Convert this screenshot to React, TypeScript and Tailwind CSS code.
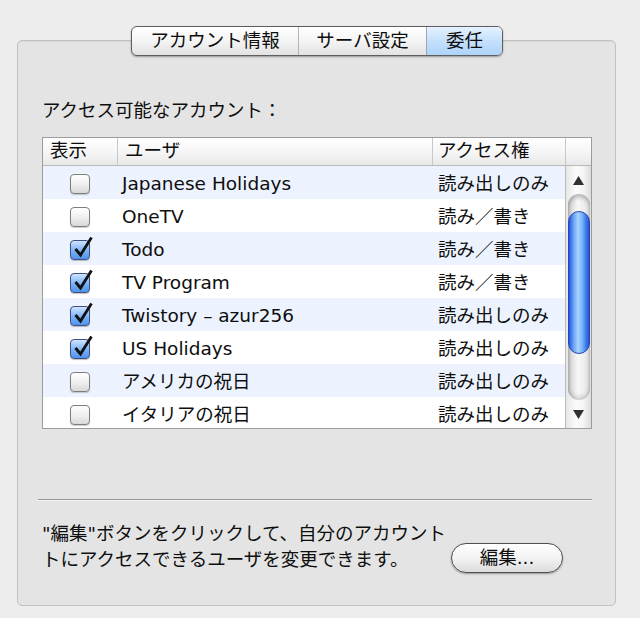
const rows = [
  { name: "Japanese Holidays", on: false, access: "読み出しのみ" },
  { name: "OneTV", on: false, access: "読み／書き" },
  { name: "Todo", on: true, access: "読み／書き" },
  { name: "TV Program", on: true, access: "読み／書き" },
  { name: "Twistory – azur256", on: true, access: "読み出しのみ" },
  { name: "US Holidays", on: true, access: "読み出しのみ" },
  { name: "アメリカの祝日", on: false, access: "読み出しのみ" },
  { name: "イタリアの祝日", on: false, access: "読み出しのみ" },
];

function CheckBox({ on }: { on: boolean }) {
  return (
    <span
      className={
        on
          ? "relative block h-[20px] w-[20px] rounded-[4px] border border-[#3d4f86] bg-[linear-gradient(#cfe4ff,#78b2f6_55%,#4f93ea)] shadow-[0_1px_1px_rgba(0,0,0,0.25)]"
          : "relative block h-[20px] w-[20px] rounded-[4px] border border-[#7e7e7e] bg-[linear-gradient(#ffffff,#ececec_60%,#d8d8d8)] shadow-[0_1px_1px_rgba(0,0,0,0.2)]"
      }
    >
      {on && (
        <svg className="absolute -top-[6px] left-[1px]" width="22" height="24" viewBox="0 0 22 24">
          <path d="M3.5 14 L8.5 20 L19.5 2.5" stroke="#111" strokeWidth="2.8" fill="none" />
        </svg>
      )}
    </span>
  );
}

function Scroller() {
  return (
    <div className="flex w-[26px] flex-col border-l border-[#bdbdbd] bg-[linear-gradient(90deg,#e6e6e6,#fbfbfb_40%,#f4f4f4_70%,#dcdcdc)]">
      <div className="flex h-[28px] items-center justify-center">
        <svg width="11" height="9" viewBox="0 0 11 9">
          <path d="M5.5 0 L11 9 L0 9 Z" fill="#303030" />
        </svg>
      </div>
      <div className="mx-auto flex h-[206px] w-[22px] flex-col rounded-full bg-[linear-gradient(90deg,#cfcfcf,#f7f7f7_45%,#e4e4e4)] shadow-[inset_0_3px_4px_rgba(0,0,0,0.25),inset_0_-3px_4px_rgba(0,0,0,0.15)]">
        <div className="mt-[17px] h-[143px] w-[22px] rounded-full border border-[#2747b8] bg-[linear-gradient(90deg,#2457e0,#6ea9f5_25%,#a9d3ff_45%,#7bb6fa_65%,#3e7ce9_85%,#2a4fd0)]" />
      </div>
      <div className="flex flex-1 items-center justify-center">
        <svg width="11" height="9" viewBox="0 0 11 9">
          <path d="M0 0 L11 0 L5.5 9 Z" fill="#303030" />
        </svg>
      </div>
    </div>
  );
}

export default function App() {
  return (
    <div className="h-[618px] w-[640px] overflow-hidden bg-[#ededed] pl-[17px] pt-[40px] font-['DejaVu_Sans','Noto_Sans_CJK_JP',sans-serif] text-[18.5px] text-[#0e0e0e]">
      <div className="flex h-[566px] w-[599px] flex-col rounded-[5px] border border-[#c2c2c2] bg-[#e4e4e4] pl-[24px] pr-[23px] shadow-[inset_0_1px_1px_rgba(0,0,0,0.06)]">
        {/* tabs */}
        <div className="-mt-[15px] flex h-[30px] self-center rounded-[6px] border border-[#5e5e5e] bg-[linear-gradient(#ffffff,#f4f4f4_50%,#e2e2e2)] shadow-[0_1px_2px_rgba(0,0,0,0.35)]">
          <div className="flex w-[167px] items-center justify-center border-r border-[#b4b4b4] leading-none">
            アカウント情報
          </div>
          <div className="flex w-[128px] items-center justify-center border-r border-[#9aa6b8] leading-none">
            サーバ設定
          </div>
          <div className="flex w-[75px] items-center justify-center rounded-r-[5px] bg-[linear-gradient(#e6f2ff,#c5e0fc_50%,#aed3fa)] leading-none">
            委任
          </div>
        </div>

        <div className="mt-[43px] leading-[24px]">アクセス可能なアカウント：</div>

        {/* table */}
        <div className="mt-[14px] flex h-[292px] flex-col border border-[#9c9c9c] bg-white">
          <div className="flex h-[28px] border-b border-[#b8b8b8] bg-[linear-gradient(#ffffff,#f6f6f6_50%,#e8e8e8)] leading-[26px]">
            <div className="w-[74px] pl-[7px]">表示</div>
            <div className="w-[315px] border-l border-[#c8c8c8] pl-[7px]">ユーザ</div>
            <div className="w-[133px] border-l border-[#c8c8c8] pl-[5px]">アクセス権</div>
            <div className="flex-1 border-l border-[#c8c8c8]" />
          </div>
          <div className="flex h-[262px] overflow-hidden">
            <div className="w-[522px]">
              {rows.map((r, i) => (
                <div
                  key={r.name}
                  className={
                    i % 2 === 0
                      ? "flex h-[33px] items-center bg-[#edf3fe]"
                      : "flex h-[33px] items-center bg-white"
                  }
                >
                  <div className="flex w-[74px] justify-center pt-[3px]">
                    <CheckBox on={r.on} />
                  </div>
                  <div className="w-[315px] pl-[5px] pt-[3px]">{r.name}</div>
                  <div className="w-[133px] pl-[6px] pt-[3px]">{r.access}</div>
                </div>
              ))}
            </div>
            <Scroller />
          </div>
        </div>

        <div className="-ml-[4px] mt-[70px] border-t border-[#999999] shadow-[0_1px_0_#f4f4f4]" />

        <div className="mt-[21px] flex items-start">
          <div className="leading-[26px]">
            <div className="whitespace-nowrap">"編集"ボタンをクリックして、自分のアカウント</div>
            <div className="whitespace-nowrap">トにアクセスできるユーザを変更できます。</div>
          </div>
          <button className="ml-auto mr-[29px] mt-[22px] flex h-[30px] w-[112px] items-center justify-center rounded-full border border-[#4f4f4f] bg-[linear-gradient(#ffffff,#f3f3f3_50%,#dcdcdc)] text-[18.5px] leading-none shadow-[0_1px_2px_rgba(0,0,0,0.35)]">
            編集...
          </button>
        </div>
      </div>
    </div>
  );
}
